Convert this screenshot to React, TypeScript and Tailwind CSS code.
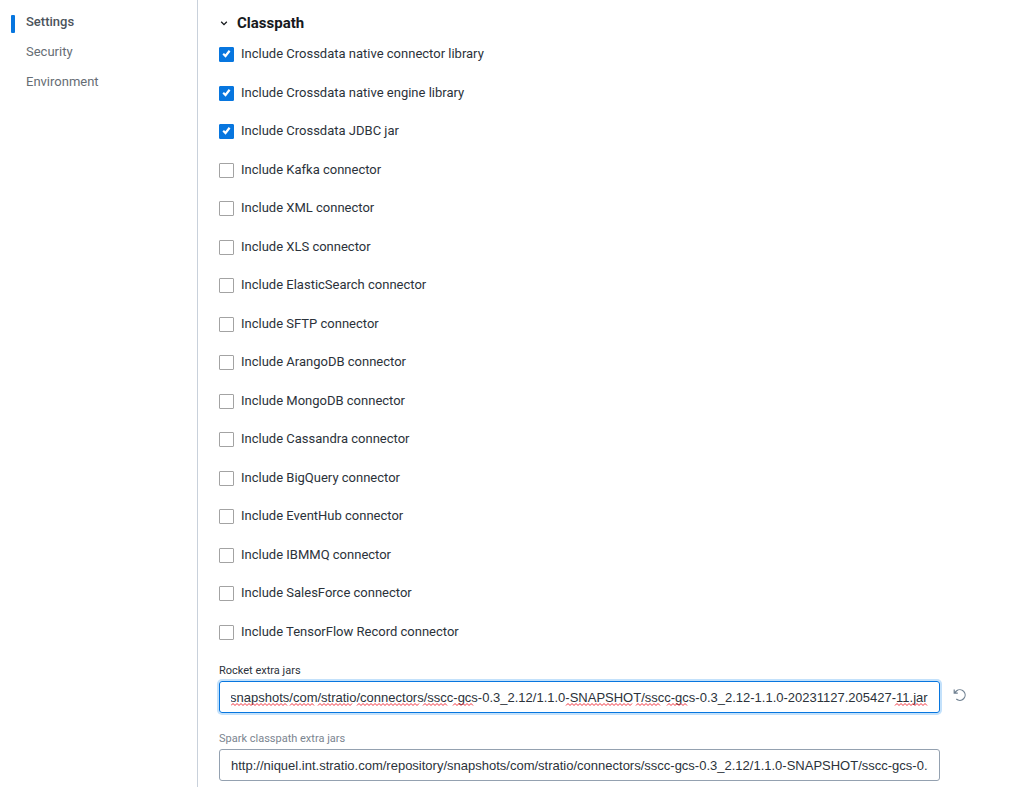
import { useLayoutEffect, useRef } from "react";

const sections = ["Settings", "Security", "Environment"];

const libraries = [
  { label: "Include Crossdata native connector library", checked: true },
  { label: "Include Crossdata native engine library", checked: true },
  { label: "Include Crossdata JDBC jar", checked: true },
  { label: "Include Kafka connector", checked: false },
  { label: "Include XML connector", checked: false },
  { label: "Include XLS connector", checked: false },
  { label: "Include ElasticSearch connector", checked: false },
  { label: "Include SFTP connector", checked: false },
  { label: "Include ArangoDB connector", checked: false },
  { label: "Include MongoDB connector", checked: false },
  { label: "Include Cassandra connector", checked: false },
  { label: "Include BigQuery connector", checked: false },
  { label: "Include EventHub connector", checked: false },
  { label: "Include IBMMQ connector", checked: false },
  { label: "Include SalesForce connector", checked: false },
  { label: "Include TensorFlow Record connector", checked: false },
];

const jarUrl =
  "http://niquel.int.stratio.com/repository/snapshots/com/stratio/connectors/sscc-gcs-0.3_2.12/1.1.0-SNAPSHOT/sscc-gcs-0.3_2.12-1.1.0-20231127.205427-11.jar";

// Start and end of each misspelled run, measured from the left of the text area.
const misspelled = [
  [0, 56],
  [59, 83],
  [87, 122],
  [126, 189],
  [192, 216],
  [222, 243],
  [335, 401],
  [405, 430],
  [436, 457],
  [664, 697],
];

function squiggle([start, end]: number[]) {
  let d = `M${start} 2.5`;
  for (let x = start + 2, up = true; x <= end; x += 2, up = !up) {
    d += `L${x} ${up ? 0.5 : 2.5}`;
  }
  return d;
}

function LibraryOption({ label, checked }: { label: string; checked: boolean }) {
  return (
    <label className="flex items-start gap-[7px] text-[13px] leading-4 text-[#2b323a]">
      <span className="mt-px grid size-[15px] shrink-0">
        <input
          type="checkbox"
          defaultChecked={checked}
          className="peer col-start-1 row-start-1 size-[15px] appearance-none rounded-[1px] border border-[#a3a3a3] bg-white checked:border-[#0776df] checked:bg-[#0776df]"
        />
        <svg
          viewBox="0 0 15 15"
          className="pointer-events-none invisible col-start-1 row-start-1 size-[15px] peer-checked:visible"
          fill="none"
          stroke="#fff"
          strokeWidth="2.2"
          aria-hidden="true"
        >
          <path d="M4.2 6.8 6.5 9 10.6 3.8" />
        </svg>
      </span>
      {label}
    </label>
  );
}

export default function App() {
  const rocketJars = useRef<HTMLInputElement>(null);

  useLayoutEffect(() => {
    const field = rocketJars.current;
    if (field) field.scrollLeft = field.scrollWidth;
  }, []);

  return (
    <div className="flex bg-white font-[Roboto,sans-serif] text-[13px] text-[#2b323a]">
      <nav className="w-[198px] shrink-0 border-r border-[#c9d1db] pt-[14px]">
        <ul>
          {sections.map((name, i) => (
            <li key={name} className="flex h-[30px] items-start pl-[11px]">
              <span
                className={
                  i === 0
                    ? "mr-[11px] mt-px h-[18px] w-1 rounded-[1px] bg-[#0776df]"
                    : "mr-[11px] w-1"
                }
              />
              <a
                href="#"
                className={
                  i === 0
                    ? "leading-4 font-medium text-[#4b535b]"
                    : "leading-4 text-[#666d74]"
                }
              >
                {name}
              </a>
            </li>
          ))}
        </ul>
      </nav>

      <main className="min-w-0 flex-1 pt-[13px] pr-[86px] pb-[6px] pl-[21px]">
        <h2>
          <button
            type="button"
            className="flex items-center gap-[8px] text-[15px] leading-5 font-bold text-[#16191d]"
          >
            <svg
              viewBox="0 0 10 10"
              className="size-[10px]"
              fill="none"
              stroke="currentColor"
              strokeWidth="1.3"
              aria-hidden="true"
            >
              <path d="M2.2 3.8 5 6.6 7.8 3.8" />
            </svg>
            Classpath
          </button>
        </h2>

        <div className="mt-[13px] grid min-h-[616px] auto-rows-fr">
          {libraries.map((item) => (
            <LibraryOption key={item.label} {...item} />
          ))}
        </div>

        <div className="pt-px">
          <label htmlFor="rocket-jars" className="block text-[11px] leading-4 text-[#2b323a]">
            Rocket extra jars
          </label>
          <div className="relative mt-[2px]">
            <input
              id="rocket-jars"
              ref={rocketJars}
              type="text"
              spellCheck={false}
              defaultValue={jarUrl}
              className="block h-8 w-full rounded-[3px] border border-[#0776df] px-[11px] font-['Liberation_Sans',sans-serif] text-[13px] text-[#2b323a] shadow-[0_0_0_2px_#c3e1fb] outline-none"
            />
            <svg
              className="pointer-events-none absolute top-[22px] right-3 h-[3px] w-[697px]"
              viewBox="0 0 697 3"
              fill="none"
              stroke="#f0303c"
              strokeWidth="1"
              aria-hidden="true"
            >
              {misspelled.map((run) => (
                <path key={run[0]} d={squiggle(run)} />
              ))}
            </svg>
            <button
              type="button"
              aria-label="Undo"
              className="absolute top-[7px] -right-[27px] text-[#6f8091]"
            >
              <svg
                viewBox="0 0 14 14"
                className="size-[14px]"
                fill="none"
                stroke="currentColor"
                strokeWidth="1.2"
                aria-hidden="true"
              >
                <path d="M1.2 1.6V5.2H4.8M1.5 5 3.4 3A5.3 5.3 0 1 1 3.3 11" />
              </svg>
            </button>
          </div>
        </div>

        <div className="mt-[18px]">
          <label htmlFor="spark-jars" className="block text-[11px] leading-4 text-[#7b8590]">
            Spark classpath extra jars
          </label>
          <input
            id="spark-jars"
            type="text"
            spellCheck={false}
            defaultValue={jarUrl}
            className="mt-[2px] block h-8 w-full rounded-[3px] border border-[#94a1b0] px-[11px] font-['Liberation_Sans',sans-serif] text-[13px] text-[#2b323a] outline-none"
          />
        </div>
      </main>
    </div>
  );
}
